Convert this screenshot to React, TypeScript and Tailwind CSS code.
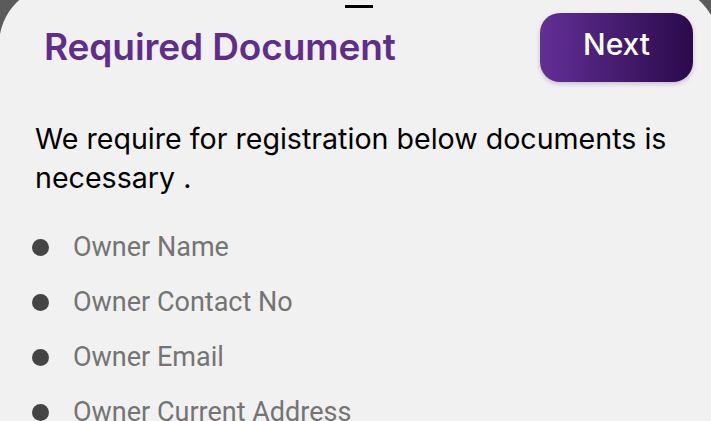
import React from "react";

const items = ["Owner Name", "Owner Contact No", "Owner Email", "Owner Current Address"];

export default function App() {
  return (
    <div className="w-[711px] h-[421px] overflow-hidden bg-[#5b5b5b]">
      <div className="-mt-[15px] -ml-[1px] -mr-[8px] h-[450px] rounded-t-[60px] bg-[#f1f1f1] pt-[15px]">
        <div className="flex justify-center pt-[5px]">
          <div className="w-[28px] h-[3px] bg-black" />
        </div>
        <div className="flex items-start justify-between pl-[45px] pr-[26px] pt-[5px]">
          <h1
            className="mt-[12px] text-[37px] leading-[44px] font-semibold text-[#5f2d8e] tracking-[-0.1px] whitespace-nowrap"
            style={{ fontFamily: "Inter, 'Noto Sans', sans-serif" }}
          >
            Required Document
          </h1>
          <button
            className="w-[153px] h-[69px] rounded-[20px] bg-gradient-to-r from-[#632f96] to-[#2b0a4b] text-white text-[30px] font-medium shadow-[0_2px_4px_rgba(80,40,120,0.25)] pb-[6px]"
            style={{ fontFamily: "Inter, 'Noto Sans', sans-serif" }}
          >
            Next
          </button>
        </div>
        <p
          className="pl-[36px] mt-[37px] text-[28.6px] leading-[39px] text-black whitespace-nowrap"
          style={{ fontFamily: "Inter, 'Noto Sans', sans-serif" }}
        >
          We require for registration below documents is
          <br />
          necessary .
        </p>
        <ul className="mt-[34px] pl-[33px] flex flex-col gap-[23px]">
          {items.map((t) => (
            <li key={t} className="flex items-center h-[32px]">
              <span className="w-[17px] h-[17px] rounded-full bg-[#444444] shrink-0" />
              <span
                className="ml-[24px] text-[27px] text-[#747474] whitespace-nowrap"
                style={{ fontFamily: "Roboto, sans-serif" }}
              >
                {t}
              </span>
            </li>
          ))}
        </ul>
      </div>
    </div>
  );
}
